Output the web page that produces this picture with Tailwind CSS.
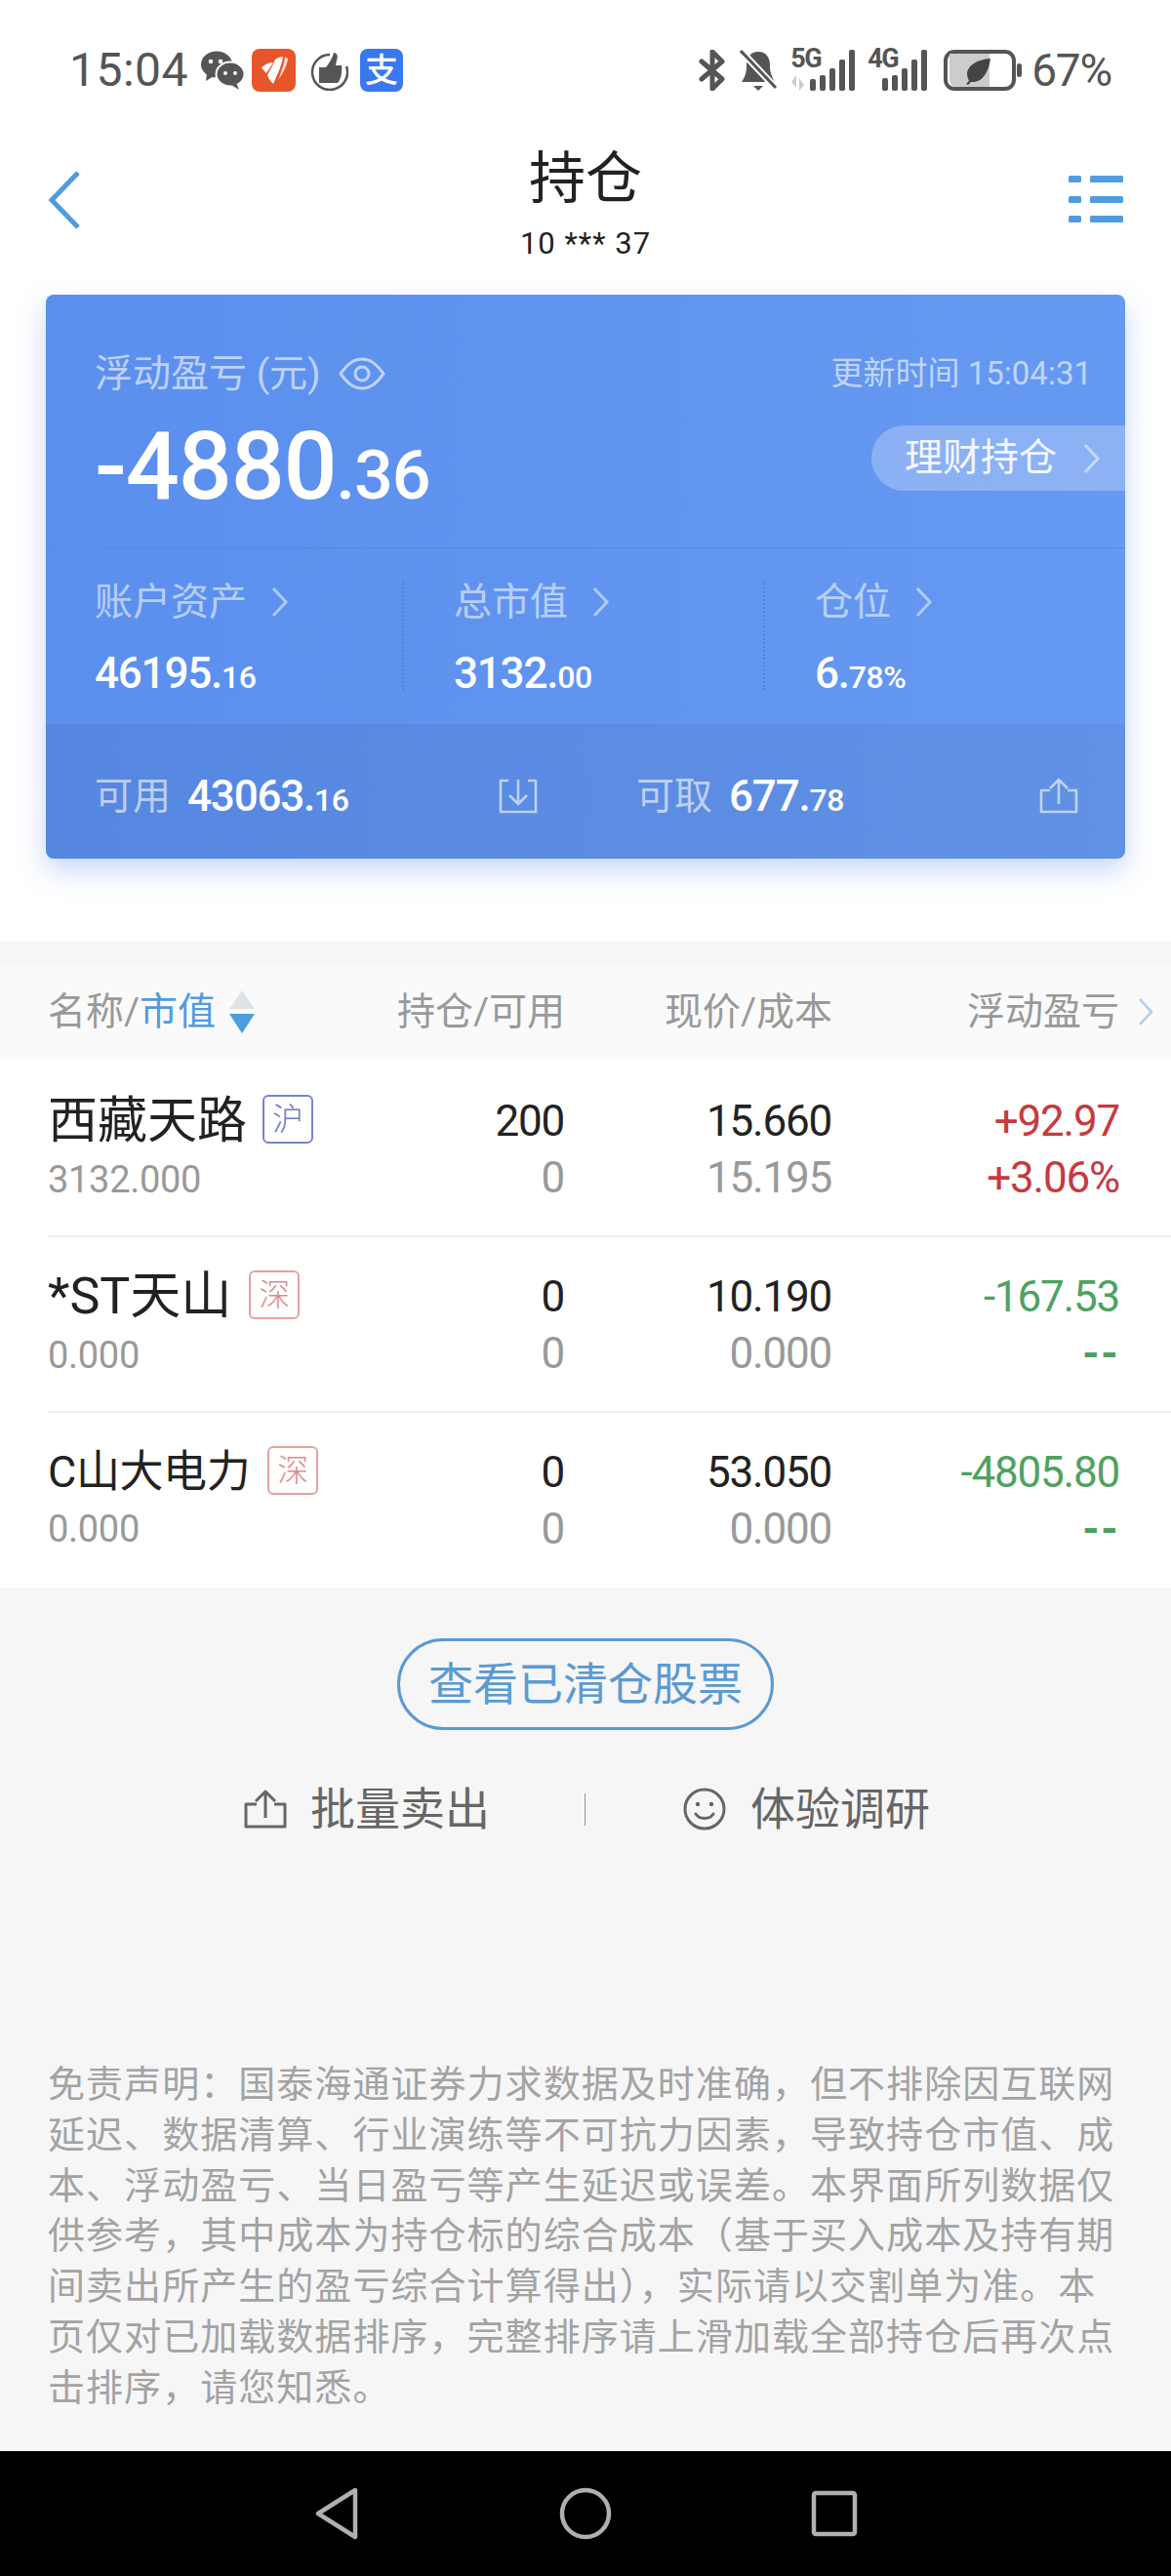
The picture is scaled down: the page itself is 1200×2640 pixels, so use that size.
<!DOCTYPE html>
<html lang="zh-CN"><head><meta charset="utf-8"><script src="https://cdn.jsdelivr.net/npm/@tailwindcss/browser@4"></script></head>
<body class="bg-white font-[Roboto,'Noto_Sans_CJK_SC',sans-serif]">
<div class="w-[1200px] h-[2640px] flex flex-col overflow-hidden bg-white">

<!-- status bar -->
<div class="h-[144px] pt-[50px] pl-[71px] pr-[61px] flex items-start justify-between text-[#555]">
  <div class="flex items-center h-[44px]">
    <span class="text-[48px] leading-[46px] w-[134px] tracking-[0.5px]">15:04</span>
    <svg class="w-[46px] h-[42px]" viewBox="0 0 46 42"><ellipse cx="17" cy="15" rx="16" ry="13.5" fill="#555"/><path d="M7 24l-1 8 8-5z" fill="#555"/><ellipse cx="31" cy="25" rx="14.5" ry="12.5" fill="#555" stroke="#fff" stroke-width="2"/><path d="M37 34l3 7-8-5z" fill="#555"/><circle cx="11" cy="12" r="2.3" fill="#fff"/><circle cx="21" cy="12" r="2.3" fill="#fff"/><circle cx="26" cy="24" r="2" fill="#fff"/><circle cx="36" cy="24" r="2" fill="#fff"/></svg>
    <div class="ml-[7px] w-[45px] h-[44px] rounded-[8px] bg-[#e8552b] flex items-center justify-center">
      <svg class="w-[34px] h-[36px]" viewBox="0 0 34 36"><path d="M4 15c5-4 9-5 12-5l-7 11C7 19 5 17 4 15z" fill="#fff"/><path d="M18 7c3-2 6-3 8-3-1 8-5 17-10 28-3-3-5-6-6-9 3-6 6-11 8-16z" fill="#fff"/><path d="M28 4c2 1 3 2 3 3-1 7-5 14-10 21 3-8 6-16 7-24z" fill="#fbd4c4"/></svg>
    </div>
    <svg class="ml-[14px] w-[40px] h-[42px]" viewBox="0 0 40 42"><path d="M21 5a18 18 0 1 0 17 12" fill="none" stroke="#555" stroke-width="2.5"/><path d="M10 18h7c3-4 6-8 8-15 3 0 5 3 3 8l-1 5h6c1 8-1 15-4 18H10z" fill="#555"/></svg>
    <div class="ml-[12px] w-[44px] h-[44px] rounded-[8px] bg-[#3a78ef] flex items-center justify-center text-white text-[34px] leading-none font-medium">支</div>
  </div>
  <div class="flex items-center h-[44px]">
    <svg class="w-[28px] h-[42px]" viewBox="0 0 28 42"><path d="M3 12l21 18-10 10V2l10 10L3 30" fill="none" stroke="#555" stroke-width="5" stroke-linejoin="round" stroke-linecap="round"/></svg>
    <svg class="ml-[14px] w-[38px] h-[44px]" viewBox="0 0 38 44"><path d="M19 3c8 0 12 6 12 14 0 9 3 13 5 17H2c3-5 5-8 5-17 0-8 4-14 12-14z" fill="#555"/><path d="M14 38h10l-5 5z" fill="#555"/><path d="M2 3l34 36" stroke="#fff" stroke-width="7"/><path d="M1 2l36 38" stroke="#555" stroke-width="3"/></svg>
    <div class="ml-[14px] relative w-[66px] h-[42px]">
      <span class="absolute left-0 -top-[4px] text-[27px] leading-[27px] font-bold tracking-[-1.5px]">5G</span>
      <svg class="absolute left-0 bottom-0 w-[66px] h-[42px]" viewBox="0 0 66 42"><path d="M6 26v13l-5-6zM9 29v13l5-6z" fill="#ccc"/><g fill="#555"><rect x="20" y="30" width="6" height="12" rx="2"/><rect x="30" y="26" width="6" height="16" rx="2"/><rect x="40" y="19" width="6" height="23" rx="2"/><rect x="50" y="10" width="6" height="32" rx="2"/><rect x="60" y="0" width="6" height="42" rx="2"/></g></svg>
    </div>
    <div class="ml-[13px] relative w-[61px] h-[42px]">
      <span class="absolute left-0 -top-[4px] text-[27px] leading-[27px] font-bold tracking-[-1.5px]">4G</span>
      <svg class="absolute left-0 bottom-0 w-[61px] h-[42px]" viewBox="0 0 61 42"><g fill="#555"><rect x="15" y="29" width="6" height="13" rx="2"/><rect x="25" y="26" width="6" height="16" rx="2"/><rect x="35" y="19" width="6" height="23" rx="2"/><rect x="45" y="10" width="6" height="32" rx="2"/><rect x="55" y="0" width="6" height="42" rx="2"/></g></svg>
    </div>
    <svg class="ml-[17px] w-[81px] h-[42px]" viewBox="0 0 81 42"><rect x="2" y="2" width="70" height="38" rx="9" fill="#fff" stroke="#555" stroke-width="4"/><path d="M6 4h41v34H13a7 7 0 0 1-7-7z" fill="#ccc"/><path d="M48 9C34 10 25 16 24 24c0 3 1 6 2 8l-3 3 2 1 3-3c12 1 18-10 20-24z" fill="#444"/><rect x="75" y="14" width="5" height="14" rx="2.5" fill="#555"/></svg>
    <span class="ml-[9px] text-[46px] leading-[44px] tracking-[-1.2px]">67%</span>
  </div>
</div>

<!-- title bar -->
<div class="relative h-[158px] flex flex-col items-center">
  <div class="text-[58px] leading-[78px] text-[#222]">持仓</div>
  <div class="mt-[8px] text-[31px] leading-[40px] text-[#222] tracking-[1px]">10 *** 37</div>
  <svg class="absolute left-[48px] top-[30px] w-[36px] h-[62px]" viewBox="0 0 36 62"><path d="M32 3L5 31l27 28" fill="none" stroke="#4f9ce0" stroke-width="5"/></svg>
  <svg class="absolute left-[1095px] top-[36px] w-[56px] h-[48px]" viewBox="0 0 56 48"><g fill="#4f9ce0"><rect x="0" y="0" width="13" height="7" rx="1.5"/><rect x="22" y="0" width="34" height="7" rx="1.5"/><rect x="0" y="21" width="13" height="7" rx="1.5"/><rect x="22" y="21" width="34" height="7" rx="1.5"/><rect x="0" y="41" width="13" height="7" rx="1.5"/><rect x="22" y="41" width="34" height="7" rx="1.5"/></g></svg>
</div>

<!-- asset card -->
<div class="mx-[47px] h-[578px] rounded-[8px] overflow-hidden shadow-[0_12px_28px_rgba(90,140,240,0.35)] bg-gradient-to-r from-[#5b8fee] to-[#6699f1] text-white flex flex-col">
  <div class="h-[260px] relative pl-[50px] pr-[34px] pt-[59px] border-b-[1px] border-[#5a8ae0]">
    <div class="flex items-center justify-between h-[44px]">
      <div class="flex items-center text-[39px] leading-[44px] text-white/60">
        <span>浮动盈亏 (元)</span>
        <svg class="ml-[18px] w-[48px] h-[36px]" viewBox="0 0 48 36"><path d="M2 18C10 7 16 3 24 3s14 4 22 15c-8 11-14 15-22 15S10 29 2 18z" fill="none" stroke="currentColor" stroke-width="3"/><circle cx="24" cy="18" r="7" fill="none" stroke="currentColor" stroke-width="3"/></svg>
      </div>
      <span class="text-[33px] leading-[44px] text-white/60">更新时间 15:04:31</span>
    </div>
    <div class="mt-[33px] font-medium leading-[80px] text-[97px] tracking-[-1.2px]">-4880<span class="text-[70px] tracking-[-1px]">.36</span></div>
    <div class="absolute right-0 top-[134px] w-[260px] h-[67px] rounded-l-[34px] bg-white/25 pl-[34px] flex items-center text-[39px] text-white/90">
      <span>理财持仓</span>
      <svg class="ml-[26px] w-[20px] h-[32px]" viewBox="0 0 20 32"><path d="M3 2l13 14L3 30" fill="none" stroke="#fff" stroke-opacity=".5" stroke-width="3"/></svg>
    </div>
  </div>
  <div class="h-[180px] flex pt-[33px]">
    <div class="w-[367px] pl-[50px] border-r-[2px] border-dotted border-[#5283dc] h-[112px]">
      <div class="flex items-center text-[39px] leading-[44px] text-white/55"><span>账户资产</span><svg class="ml-[24px] w-[20px] h-[32px]" viewBox="0 0 20 32"><path d="M3 2l13 14L3 30" fill="none" stroke="#fff" stroke-opacity=".5" stroke-width="3"/></svg></div>
      <div class="mt-[27px] text-[44px] leading-[48px] font-medium tracking-[-1.2px]">46195.<span class="text-[32px] tracking-[-0.5px]">16</span></div>
    </div>
    <div class="w-[370px] pl-[51px] border-r-[2px] border-dotted border-[#5283dc] h-[112px]">
      <div class="flex items-center text-[39px] leading-[44px] text-white/55"><span>总市值</span><svg class="ml-[24px] w-[20px] h-[32px]" viewBox="0 0 20 32"><path d="M3 2l13 14L3 30" fill="none" stroke="#fff" stroke-opacity=".5" stroke-width="3"/></svg></div>
      <div class="mt-[27px] text-[44px] leading-[48px] font-medium tracking-[-1.2px]">3132.<span class="text-[32px] tracking-[-0.5px]">00</span></div>
    </div>
    <div class="flex-1 pl-[51px]">
      <div class="flex items-center text-[39px] leading-[44px] text-white/55"><span>仓位</span><svg class="ml-[24px] w-[20px] h-[32px]" viewBox="0 0 20 32"><path d="M3 2l13 14L3 30" fill="none" stroke="#fff" stroke-opacity=".5" stroke-width="3"/></svg></div>
      <div class="mt-[27px] text-[44px] leading-[48px] font-medium tracking-[-1.2px]">6.<span class="text-[32px] tracking-[-0.5px]">78%</span></div>
    </div>
  </div>
  <div class="flex-1 bg-black/[0.05] flex items-center pt-[10px]">
    <div class="w-[552px] pl-[50px] flex items-center border-r-[1px] border-[#5a8ae0] h-[46px]">
      <span class="text-[39px] text-white/60">可用</span>
      <span class="ml-[17px] text-[44px] font-medium tracking-[-1.2px] flex-1">43063.<span class="text-[32px] tracking-[-0.5px]">16</span></span>
      <svg class="w-[42px] h-[38px] mr-[46px]" viewBox="0 0 42 38"><path d="M11 3H3v32h36V3h-8M21 2v25M12 18l9 9 9-9" fill="none" stroke="#fff" stroke-opacity=".6" stroke-width="2.6" stroke-linejoin="round"/></svg>
    </div>
    <div class="flex-1 pl-[53px] pr-[47px] flex items-center">
      <span class="text-[39px] text-white/60">可取</span>
      <span class="ml-[17px] text-[44px] font-medium tracking-[-1.2px] flex-1">677.<span class="text-[32px] tracking-[-0.5px]">78</span></span>
      <svg class="w-[42px] h-[38px]" viewBox="0 0 42 38"><path d="M12 13H3v22h36V13h-9M21 27V2M12 11l9-9 9 9" fill="none" stroke="#fff" stroke-opacity=".6" stroke-width="2.6" stroke-linejoin="round"/></svg>
    </div>
  </div>
</div>

<div class="h-[85px] shrink-0"></div>
<div class="h-[23px] shrink-0 bg-[#f5f6f7]"></div>

<!-- table header -->
<div class="h-[98px] shrink-0 bg-[#fafafa] pl-[49px] flex items-center text-[39px] text-[#999]">
  <div class="w-[351px] flex items-center"><span>名称/<span class="text-[#4f9ce0]">市值</span></span>
    <svg class="ml-[12px] w-[30px] h-[46px]" viewBox="0 0 30 46"><path d="M15 1l13 19H2z" fill="#dfe3e8"/><path d="M15 45L2 25h26z" fill="#4f9ce0"/></svg></div>
  <div class="w-[179px] text-right whitespace-nowrap">持仓/可用</div>
  <div class="w-[274px] text-right whitespace-nowrap">现价/成本</div>
  <div class="w-[294px] text-right whitespace-nowrap">浮动盈亏</div>
  <svg class="ml-[18px] w-[18px] h-[30px]" viewBox="0 0 18 30"><path d="M3 2l12 13L3 28" fill="none" stroke="#b9cfe6" stroke-width="2.6"/></svg>
</div>

<!-- rows -->
<div class="h-[180px] shrink-0 pl-[49px] pr-[53px] flex pt-[34px] text-[44px] leading-[58px] tracking-[-1.2px] text-[#222]">
  <div class="w-[351px] tracking-normal">
    <div class="flex items-center h-[58px]"><span class="text-[51px] leading-[58px]">西藏天路</span><span class="ml-[16px] w-[52px] h-[50px] -mt-[4px] rounded-[6px] border-2 border-[#7b84c9] text-[#6f78c4] text-[32px] leading-[46px] text-center font-light">沪</span></div>
    <div class="mt-[6px] text-[38px] leading-[50px] text-[#999] tracking-[-0.3px]">3132.000</div>
  </div>
  <div class="w-[178px] text-right"><div>200</div><div class="text-[#999]">0</div></div>
  <div class="w-[274px] text-right"><div>15.660</div><div class="text-[#999]">15.195</div></div>
  <div class="w-[295px] text-right text-[#c8393f]"><div>+92.97</div><div>+3.06%</div></div>
</div>
<div class="ml-[49px] h-[2px] shrink-0 bg-[#eee]"></div>
<div class="h-[178px] shrink-0 pl-[49px] pr-[53px] flex pt-[32px] text-[44px] leading-[58px] tracking-[-1.2px] text-[#222]">
  <div class="w-[351px] tracking-normal">
    <div class="flex items-center h-[58px]"><span class="text-[52px] leading-[58px]">*ST天山</span><span class="ml-[18px] w-[52px] h-[50px] -mt-[4px] rounded-[6px] border-2 border-[#e8a0a4] text-[#e08a8e] text-[32px] leading-[46px] text-center font-light">深</span></div>
    <div class="mt-[6px] text-[38px] leading-[50px] text-[#999] tracking-[-0.3px]">0.000</div>
  </div>
  <div class="w-[178px] text-right"><div>0</div><div class="text-[#999]">0</div></div>
  <div class="w-[274px] text-right"><div>10.190</div><div class="text-[#999]">0.000</div></div>
  <div class="w-[295px] text-right text-[#4ea25f]"><div>-167.53</div><div class="tracking-[1.5px] font-bold">--</div></div>
</div>
<div class="ml-[49px] h-[2px] shrink-0 bg-[#eee]"></div>
<div class="h-[179px] shrink-0 pl-[49px] pr-[53px] flex pt-[32px] text-[44px] leading-[58px] tracking-[-1.2px] text-[#222]">
  <div class="w-[351px] tracking-normal">
    <div class="flex items-center h-[58px]"><span class="text-[45px] leading-[58px] tracking-[-0.4px]">C山大电力</span><span class="ml-[18px] w-[52px] h-[50px] -mt-[4px] rounded-[6px] border-2 border-[#e8a0a4] text-[#e08a8e] text-[32px] leading-[46px] text-center font-light">深</span></div>
    <div class="mt-[4px] text-[38px] leading-[50px] text-[#999] tracking-[-0.3px]">0.000</div>
  </div>
  <div class="w-[178px] text-right"><div>0</div><div class="text-[#999]">0</div></div>
  <div class="w-[274px] text-right"><div>53.050</div><div class="text-[#999]">0.000</div></div>
  <div class="w-[295px] text-right text-[#4ea25f]"><div>-4805.80</div><div class="tracking-[1.5px] font-bold">--</div></div>
</div>

<!-- lower area -->
<div class="flex-1 bg-[#f6f6f7] flex flex-col">
  <div class="mt-[52px] self-center w-[386px] h-[94px] rounded-full border-[3px] border-[#5b9ad2] text-[#5b9ad2] text-[46px] flex items-center justify-center">查看已清仓股票</div>
  <div class="mt-[51px] h-[60px] flex items-center text-[46px] text-[#666]">
    <div class="w-[599px] pl-[250px] flex items-center">
      <svg class="w-[44px] h-[42px]" viewBox="0 0 44 42"><path d="M13 16H2v23h40V16H31M22 30V3M12 13L22 3l10 10" fill="none" stroke="#666" stroke-width="3" stroke-linejoin="round"/></svg>
      <span class="ml-[24px] leading-[60px]">批量卖出</span>
    </div>
    <div class="w-[1px] h-[33px] bg-[#999]"></div>
    <div class="pl-[100px] flex items-center">
      <svg class="w-[44px] h-[44px]" viewBox="0 0 44 44"><circle cx="22" cy="22" r="20" fill="none" stroke="#666" stroke-width="3"/><circle cx="15" cy="17" r="2.2" fill="#666"/><circle cx="29" cy="17" r="2.2" fill="#666"/><path d="M13 27c4 6 14 6 18 0" fill="none" stroke="#666" stroke-width="3" stroke-linecap="round"/></svg>
      <span class="ml-[25px] leading-[60px]">体验调研</span>
    </div>
  </div>
  <div class="mt-[227px] pl-[49px] text-[38px] leading-[51.8px] tracking-[1.05px] text-[#a3a3a3] whitespace-nowrap">免责声明：国泰海通证券力求数据及时准确，但不排除因互联网<br>延迟、数据清算、行业演练等不可抗力因素，导致持仓市值、成<br>本、浮动盈亏、当日盈亏等产生延迟或误差。本界面所列数据仅<br>供参考，其中成本为持仓标的综合成本（基于买入成本及持有期<br>间卖出所产生的盈亏综合计算得出），实际请以交割单为准。本<br>页仅对已加载数据排序，完整排序请上滑加载全部持仓后再次点<br>击排序，请您知悉。</div>
</div>

<!-- nav -->
<div class="h-[128px] shrink-0 bg-black relative">
  <svg class="absolute left-[322px] top-[37px] w-[46px] h-[54px]" viewBox="0 0 46 54"><path d="M42 3v48L4 27z" fill="none" stroke="#b0b0b0" stroke-width="4.5" stroke-linejoin="round"/></svg>
  <svg class="absolute left-[573px] top-[37px] w-[54px] h-[54px]" viewBox="0 0 54 54"><circle cx="27" cy="27" r="24" fill="none" stroke="#b0b0b0" stroke-width="4.5"/></svg>
  <svg class="absolute left-[831px] top-[40px] w-[48px] h-[48px]" viewBox="0 0 48 48"><rect x="3" y="3" width="42" height="42" rx="2" fill="none" stroke="#b0b0b0" stroke-width="4.5"/></svg>
</div>
</div>
</body></html>
